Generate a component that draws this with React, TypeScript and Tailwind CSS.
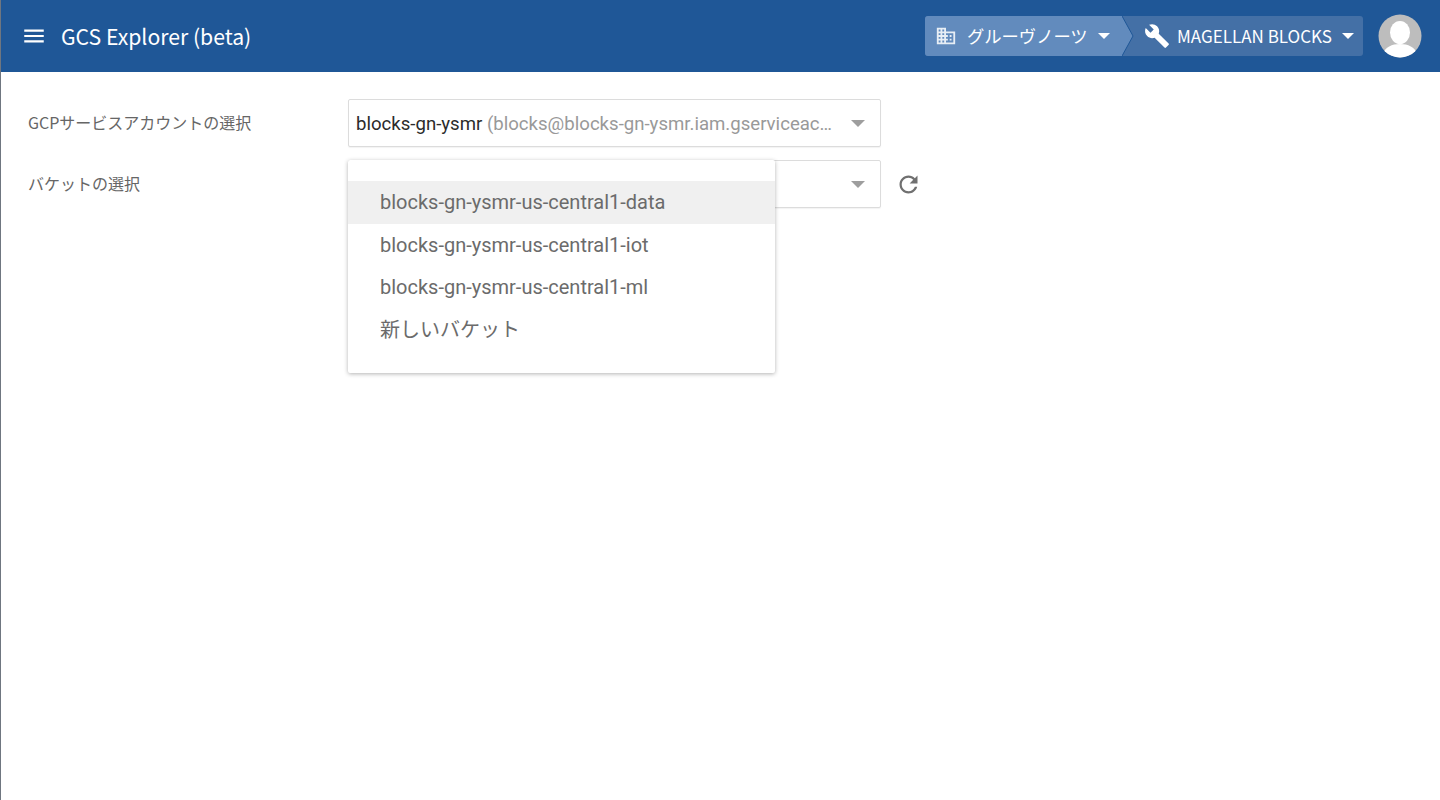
const cjk = '"Noto Sans CJK JP", "Noto Sans", sans-serif';
const roboto = 'Roboto, "Noto Sans CJK JP", sans-serif';

function Caret({ className, width = 12 }: { className: string; width?: number }) {
    return (
        <svg width={width} height={width / 2} viewBox="0 0 12 6" className={className}>
            <path d="M0 0h12L6 6z" fill="currentColor" />
        </svg>
    );
}

function MenuIcon() {
    return (
        <svg width="26" height="26" viewBox="0 0 24 24" fill="#fff" className="ml-[20px]">
            <path d="M3 18h18v-2H3v2zm0-5h18v-2H3v2zm0-5h18V6H3v2z" />
        </svg>
    );
}

function DomainIcon() {
    return (
        <svg width="22" height="22" viewBox="0 0 24 24" fill="#fff" fillOpacity="0.85">
            <path d="M12 7V3H2v18h20V7H12zM6 19H4v-2h2v2zm0-4H4v-2h2v2zm0-4H4V9h2v2zm0-4H4V5h2v2zm4 12H8v-2h2v2zm0-4H8v-2h2v2zm0-4H8V9h2v2zm0-4H8V5h2v2zm10 12h-8v-2h2v-2h-2v-2h2v-2h-2V9h8v10zm-2-8h-2v2h2v-2zm0 4h-2v2h2v-2z" />
        </svg>
    );
}

function Wrench() {
    return (
        <svg width="26" height="26" viewBox="0 0 24 24" fill="#fff">
            <path d="M22.7 19l-9.1-9.1c.9-2.3.4-5-1.500-6.900-2-2-5-2.400-7.400-1.300L9 6 6 9 1.600 4.700C.4 7.100.9 10.100 2.900 12.100c1.900 1.900 4.600 2.400 6.900 1.500l9.100 9.100c.4.400 1 .4 1.400 0l2.300-2.300c.5-.4.5-1.100.1-1.400z" />
        </svg>
    );
}

function RefreshIcon() {
    return (
        <svg width="27" height="27" viewBox="0 0 24 24" fill="#707070" className="ml-[14px]">
            <path d="M17.65 6.35C16.2 4.9 14.21 4 12 4c-4.42 0-7.99 3.58-7.99 8s3.57 8 7.99 8c3.73 0 6.84-2.55 7.73-6h-2.08c-.82 2.33-3.04 4-5.65 4-3.31 0-6-2.69-6-6s2.69-6 6-6c1.66 0 3.14.69 4.22 1.78L13 11h7V4l-2.35 2.35z" />
        </svg>
    );
}

function Avatar() {
    return (
        <svg width="44" height="44" viewBox="0 0 44 44" className="ml-[15px]">
            <defs>
                <clipPath id="avatar-clip">
                    <circle cx="22" cy="22" r="21.500" />
                </clipPath>
            </defs>
            <g clipPath="url(#avatar-clip)">
                <rect width="44" height="44" fill="#bdbdbd" />
                <ellipse cx="22" cy="18.500" rx="10" ry="11.500" fill="#fff" />
                <path d="M5 40C7 33 14 30 22 30S37 33 39 40V44H5z" fill="#fff" />
            </g>
        </svg>
    );
}

function Header() {
    return (
        <header className="flex h-[72px] items-center bg-[#1f5797] text-white" style={{ fontFamily: cjk }}>
            <MenuIcon />
            <div className="ml-[14px] text-[21.200px] leading-none">GCS Explorer (beta)</div>
            <div className="ml-auto flex items-center pr-[18px]">
                <div className="flex h-10 overflow-hidden rounded-[3px] bg-[#4470a6]">
                    <div className="flex w-[197px] items-center bg-[#628bbd] pl-[10px]">
                        <DomainIcon />
                        <span className="ml-[10px] text-[17.300px]">グルーヴノーツ</span>
                        <Caret className="ml-[10px] text-white" />
                    </div>
                    <div className="relative flex w-[241px] items-center pl-[22px]">
                        <svg width="12" height="40" viewBox="0 0 12 40" className="absolute left-0 top-0">
                            <path d="M0 0L11 20L0 40z" fill="#628bbd" />
                            <path d="M0 0L11 20L0 40" fill="none" stroke="#1f5797" strokeWidth="1" />
                        </svg>
                        <Wrench />
                        <span className="ml-[7px] text-[17px]">MAGELLAN BLOCKS</span>
                        <Caret className="ml-[10px] text-white" />
                    </div>
                </div>
                <Avatar />
            </div>
        </header>
    );
}

function SelectBox({ children }: { children?: React.ReactNode }) {
    return (
        <div className="flex h-12 w-[533px] items-center rounded-[2px] border border-[#dcdcdc] bg-white pl-[7px] pr-[15px] shadow-[0_1px_1px_rgba(0,0,0,0.05)]">
            <div className="min-w-0 flex-1 whitespace-nowrap pt-[3px] text-[18.600px]" style={{ fontFamily: roboto }}>
                {children}
            </div>
            <Caret width={14} className="ml-[14px] shrink-0 text-[#9e9e9e]" />
        </div>
    );
}

const buckets = ['blocks-gn-ysmr-us-central1-data', 'blocks-gn-ysmr-us-central1-iot', 'blocks-gn-ysmr-us-central1-ml', '新しいバケット'];

export default function App() {
    return (
        <div className="h-[800px] overflow-hidden border-l border-[#6f7680] bg-white">
            <Header />
            <div className="pl-[27px] pt-[27px]">
                <div className="flex items-center">
                    <label className="w-[320px] pb-[2px] text-[16px] text-[#666]" style={{ fontFamily: cjk }}>
                        GCPサービスアカウントの選択
                    </label>
                    <SelectBox>
                        <span className="text-[#2b2b2b]">blocks-gn-ysmr</span>{' '}
                        <span className="text-[#999]">(blocks@blocks-gn-ysmr.iam.gserviceac…</span>
                    </SelectBox>
                </div>
                <div className="mt-[13px] flex items-center">
                    <label className="w-[320px] pb-[2px] text-[16px] text-[#666]" style={{ fontFamily: cjk }}>
                        バケットの選択
                    </label>
                    <div className="relative">
                        <SelectBox />
                        <div className="absolute left-0 top-0 w-[427px] rounded-[2px] bg-white pb-[22px] pt-[21px] shadow-[0_1px_4px_rgba(0,0,0,0.3)]" style={{ fontFamily: roboto }}>
                            {buckets.map((name, i) => (
                                <div
                                    key={name}
                                    className={`flex h-[42.500px] items-center pl-[32px] text-[20px] text-[#6b6b6b] ${i === 0 ? 'bg-[#f0f0f0]' : ''}`}
                                >
                                    {name}
                                </div>
                            ))}
                        </div>
                    </div>
                    <RefreshIcon />
                </div>
            </div>
        </div>
    );
}
